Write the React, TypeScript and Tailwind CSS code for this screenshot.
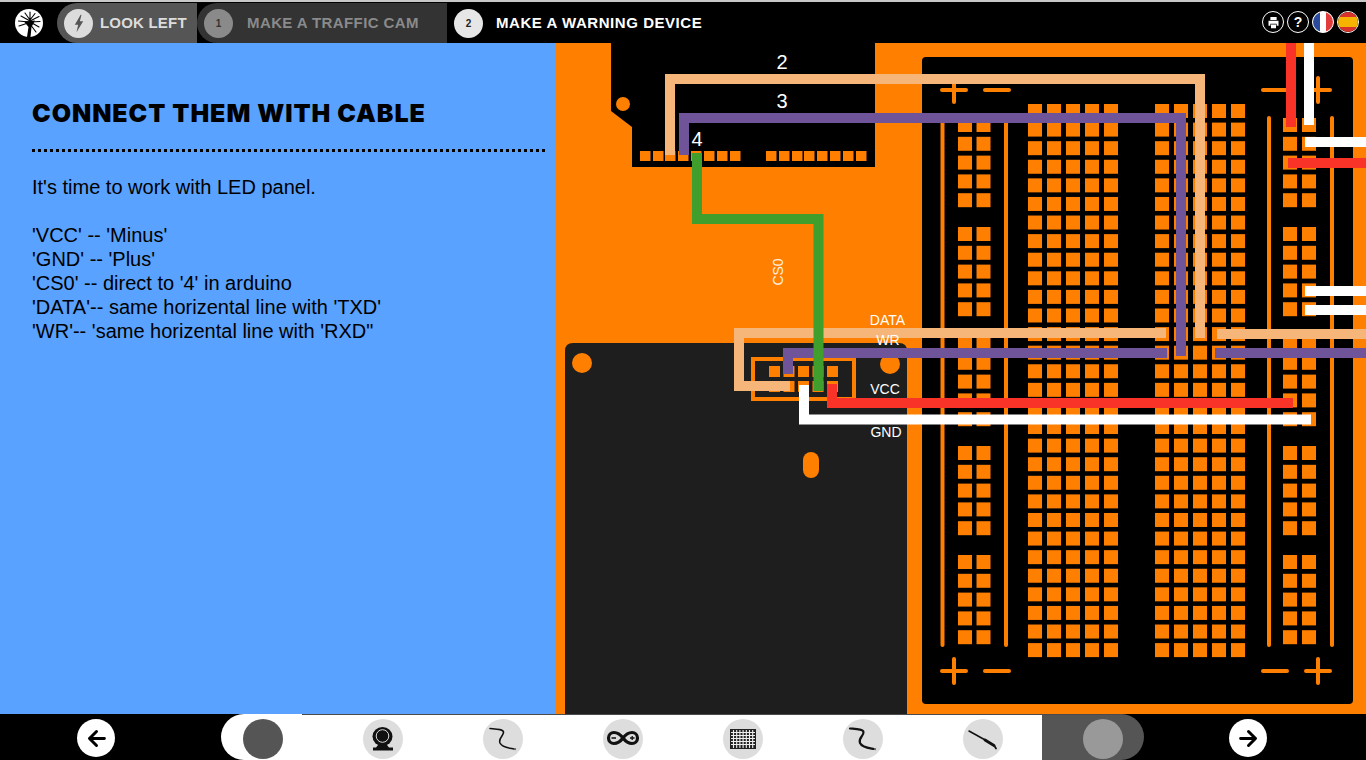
const ORANGE = "#ff7f00";
const range = (n: number) => Array.from({ length: n }, (_, i) => i);

function Line({ d, c, w = 10 }: { d: string; c: string; w?: number }) {
  return <path d={d} fill="none" stroke={c} strokeWidth={w} strokeLinejoin="miter" />;
}

function Sign({ x, y, plus }: { x: number; y: number; plus?: boolean }) {
  return (
    <g stroke={ORANGE} strokeWidth={4} strokeLinecap="round">
      <path d={`M${x - 12} ${y}H${x + 12}`} />
      {plus && <path d={`M${x} ${y - 12}V${y + 12}`} />}
    </g>
  );
}

function Board() {
  const mainRows = range(30).map((i) => 104 + i * 18.59);
  const mainCols = [1028, 1047, 1066, 1085, 1104, 1155, 1174, 1193, 1212, 1231];
  const railRows = [118, 227, 337, 446, 555].flatMap((s) => range(5).map((i) => s + i * 18.8));
  const railCols = [958, 976.5, 1283, 1302];
  return (
    <svg viewBox="555 43 811 671" className="block w-[811px] h-[671px] font-['Liberation_Sans',sans-serif]">
      <rect x="555" y="43" width="811" height="671" fill={ORANGE} />
      <path d="M611 43H875V167H632V127L611 111Z" fill="#000" />
      <circle cx="623" cy="104" r="7" fill={ORANGE} />
      {[640, 653, 665, 678, 691, 704, 717, 730, 766, 779, 792, 804, 817, 830, 843, 856].map((x) => (
        <rect key={x} x={x} y="151" width="10.5" height="10" fill={ORANGE} />
      ))}

      <rect x="922" y="57" width="431" height="647" rx="4" fill="#000" />
      {mainCols.flatMap((x) =>
        mainRows.map((y) => <rect key={`${x}-${y}`} x={x} y={y} width="14" height="14" fill={ORANGE} />),
      )}
      {railCols.flatMap((x) =>
        railRows.map((y) => <rect key={`${x}-${y}`} x={x} y={y} width="14" height="14" fill={ORANGE} />),
      )}
      {[942.5, 1006, 1269, 1332].map((x) => (
        <path key={x} d={`M${x} 118V645`} stroke={ORANGE} strokeWidth="4" strokeLinecap="round" />
      ))}
      <Sign x={954} y={90} plus />
      <Sign x={997} y={90} />
      <Sign x={1275} y={90} />
      <Sign x={1318} y={90} plus />
      <Sign x={954} y={671} plus />
      <Sign x={997} y={671} />
      <Sign x={1275} y={671} />
      <Sign x={1318} y={671} plus />

      <path d="M565 714V351Q565 343 573 343H899Q907 343 907 351V714Z" fill="#1e1e1e" />
      <circle cx="582" cy="363" r="10" fill={ORANGE} />
      <circle cx="890" cy="364" r="10" fill={ORANGE} />
      <rect x="803" y="452" width="16" height="26" rx="8" fill={ORANGE} />
      <rect x="753" y="359" width="101" height="40" fill="none" stroke={ORANGE} strokeWidth="4" />
      {[769, 783.5, 798, 812.5, 827].flatMap((x) =>
        [366, 381].map((y) => <rect key={`${x}-${y}`} x={x} y={y} width="11" height="11" fill={ORANGE} />),
      )}

      <Line c="#f6b679" d="M670 155V79H1200V338" />
      <Line c="#6f5499" d="M684 155V118H1181V356" />
      <Line c="#f6b679" d="M1166 333H739V386H790" />
      <Line c="#f6b679" d="M1217 334H1366" />
      <Line c="#6f5499" d="M788 374V353H1167" />
      <Line c="#6f5499" d="M1215 353H1366" />
      <Line c="#3f9e2c" d="M697 153V219H818.500V391" />
      <Line c="#fa3329" d="M832 384V403H1293" />
      <Line c="#fff" d="M804 385V419.500H1311" />
      <Line c="#fa3329" d="M1291 43V127" />
      <Line c="#fff" d="M1309 43V125" />
      <Line c="#fff" d="M1305 142H1366" />
      <Line c="#fa3329" d="M1288 163H1366" />
      <Line c="#fff" d="M1305 291H1366" />
      <Line c="#fff" d="M1305 310H1366" />

      <g fill="#fff" textAnchor="middle">
        <text x="782" y="69" fontSize="20">2</text>
        <text x="782" y="108" fontSize="20">3</text>
        <text x="697" y="146" fontSize="20">4</text>
        <text x="887.500" y="325" fontSize="14">DATA</text>
        <text x="888" y="345" fontSize="14">WR</text>
        <text x="885" y="394" fontSize="14">VCC</text>
        <text x="886" y="437" fontSize="14">GND</text>
        <text x="0" y="0" fontSize="14" fill="#fff0e0" transform="translate(783 272) rotate(-90)">CS0</text>
      </g>
    </svg>
  );
}

function Logo() {
  return (
    <svg viewBox="0 0 28 28" className="h-7 w-7">
      <circle cx="14" cy="14" r="14" fill="#fff" />
      <path d="M12 28L13.500 18L9 12.500L20 11.500L16.500 18L15.500 28Z" fill="#000" />
      <g stroke="#000" strokeWidth="1.1" strokeLinecap="round">
        <path d="M15 11L15 3M15 11L10 4M15 11L20 4.500M15 12L6 7M15 12L24 7.500M14 13L3.500 12M15 13L25 12.500M13 14L4 17M17 14L24 18M15 15L21 23" />
      </g>
    </svg>
  );
}

function Step({ label, icon, text, pill, circle }: { label: string; icon: React.ReactNode; text: string; pill: string; circle: string }) {
  return (
    <div className={`flex h-[40px] items-center rounded-l-[20px] pl-[7px] ${pill}`}>
      <div className={`flex h-[29px] w-[29px] shrink-0 items-center justify-center rounded-full text-[10px] font-bold ${circle}`}>{icon}</div>
      <span className={`mt-px whitespace-nowrap text-[15px] font-bold ${text}`}>{label}</span>
    </div>
  );
}

function Round({ children, className = "" }: { children: React.ReactNode; className?: string }) {
  return <div className={`flex h-[22px] w-[22px] items-center justify-center overflow-hidden rounded-full border-[1.5px] border-white ${className}`}>{children}</div>;
}

function TopBar() {
  return (
    <header className="flex h-[43px] items-end justify-between border-t-2 border-[#c8c8c8] bg-black">
      <div className="flex items-end">
        <div className="flex h-[41px] w-[57px] items-center pl-[15px]"><Logo /></div>
        <Step
          label="LOOK LEFT"
          text="ml-[7px] tracking-[0.2px] text-[#dcdcdc]"
          pill="w-[140px] bg-[#555555]"
          circle="bg-[#dcdcdc] text-[#555]"
          icon={
            <svg viewBox="0 0 24 24" className="h-[20px] w-[20px]"><path d="M14 2L7 14H11L9 23L17 10H13L15 2Z" fill="#555" /></svg>
          }
        />
        <Step
          label="MAKE A TRAFFIC CAM"
          text="ml-[14px] tracking-[0.4px] text-[#8a8a8a]"
          pill="w-[250px] bg-[#333333]"
          circle="bg-[#8a8a8a] text-[#333]"
          icon="1"
        />
        <Step
          label="MAKE A WARNING DEVICE"
          text="ml-[13px] tracking-[0.55px] text-white"
          pill="bg-black"
          circle="bg-[#e6e6e6] text-[#222]"
          icon="2"
        />
      </div>
      <div className="mb-[10px] mr-[7px] flex gap-[3px]">
        <Round>
          <svg viewBox="0 0 24 24" className="h-[15px] w-[15px]" fill="#fff"><path d="M7 3H17V8H7ZM4 9H20V17H17V14H7V17H4ZM8 15H16V21H8Z" /></svg>
        </Round>
        <Round><span className="text-[14px] font-bold leading-none text-white">?</span></Round>
        <Round className="bg-white">
          <div className="flex h-full w-full"><div className="w-1/3 bg-[#2a4a9e]" /><div className="w-1/3 bg-white" /><div className="w-1/3 bg-[#e23b3b]" /></div>
        </Round>
        <Round>
          <div className="flex h-full w-full flex-col"><div className="h-1/4 bg-[#d8322a]" /><div className="h-1/2 bg-[#f6b400]" /><div className="h-1/4 bg-[#d8322a]" /></div>
        </Round>
      </div>
    </header>
  );
}

function Wire({ w }: { w: number }) {
  return (
    <svg viewBox="0 0 40 40" className="h-10 w-10">
      <path d="M7 9.500C13 10 20 10 20.500 13C21 17 15 19 17 24C19 28.500 26 29 31 30" fill="none" stroke="#111" strokeWidth={w} strokeLinecap="round" />
      <path d="M31 30L33 30.300" stroke="#666" strokeWidth="2" />
    </svg>
  );
}

function BottomBar() {
  const slot = "flex h-10 w-10 shrink-0 items-center justify-center rounded-full bg-[#dddddd]";
  const Arrow = ({ left }: { left?: boolean }) => (
    <div className="flex h-[38px] w-[38px] items-center justify-center rounded-full bg-white">
      <svg viewBox="0 0 24 24" className="h-[21px] w-[21px]" fill="none" stroke="#000" strokeWidth="3.400" strokeLinecap="round" strokeLinejoin="round">
        {left ? <path d="M21 12H4M12 4L4 12L12 20" /> : <path d="M3 12H20M12 4L20 12L12 20" />}
      </svg>
    </div>
  );
  return (
    <footer className="relative flex h-[46px] items-center bg-black">
      <div className="ml-[77px] mr-[106px] mt-[2px]"><Arrow left /></div>
      <div className="flex h-full w-[821px] items-end gap-[80px] rounded-l-[23px] bg-white pb-px pl-[22px]">
        <div className="h-10 w-10 shrink-0 rounded-full bg-[#555555]" />
        <div className={slot}>
          <svg viewBox="0 0 40 40" className="h-10 w-10">
            <ellipse cx="19.500" cy="17.500" rx="10" ry="9.500" fill="#111" />
            <circle cx="19.500" cy="17" r="6.300" fill="none" stroke="#ddd" strokeWidth="1" />
            <path d="M15 26H24L26 28.500H30V31.500H10V28.500H13Z" fill="#111" />
          </svg>
        </div>
        <div className={slot}><Wire w={1.6} /></div>
        <div className={slot}>
          <svg viewBox="0 0 40 40" className="h-10 w-10" fill="none" stroke="#111" strokeWidth="3.200">
            <path d="M20 19C17 15 14 13.500 11 13.500A5.500 5.500 0 0 0 11 24.500C14 24.500 17 23 20 19C23 15 26 13.500 29 13.500A5.500 5.500 0 0 1 29 24.500C26 24.500 23 23 20 19Z" />
            <path d="M8.500 19H13M27 19H31.500M29.200 17V21" strokeWidth="1.300" />
          </svg>
        </div>
        <div className={slot}>
          <svg viewBox="0 0 40 40" className="h-10 w-10">
            <rect x="7" y="10" width="26" height="20" fill="#222" />
            <path d="M10.500 11V29M13.700 11V29M16.900 11V29M20.100 11V29M23.300 11V29M26.500 11V29M29.700 11V29M8 13.500H32M8 16.500H32M8 19.500H32M8 22.500H32M8 25.500H32" stroke="#eeeeee" strokeWidth="1.100" />
          </svg>
        </div>
        <div className={slot}><Wire w={2.2} /></div>
        <div className={slot}>
          <svg viewBox="0 0 40 40" className="h-10 w-10" fill="none" stroke="#111" strokeLinecap="round">
            <path d="M6 12L24 22" strokeWidth="1.500" />
            <path d="M22 21L31 26.500" strokeWidth="2.800" />
            <path d="M31.500 27L33 29.500" strokeWidth="1.800" />
          </svg>
        </div>
      </div>
      <div className="flex h-full w-[102px] items-end rounded-r-[23px] bg-[#555555] pb-px pl-[41px]">
        <div className="h-10 w-10 rounded-full bg-[#999999]" />
      </div>
      <div className="ml-[85px] mt-[2px]"><Arrow /></div>
      <div className="absolute left-[302px] top-0 h-px w-[819px] bg-[#4a4a4a]" />
    </footer>
  );
}

export default function App() {
  return (
    <div className="flex h-[760px] w-[1366px] flex-col overflow-hidden bg-black font-['Liberation_Sans',Arial,sans-serif]">
      <TopBar />
      <main className="flex h-[671px]">
        <section className="w-[555px] bg-[#5aa2ff] pl-[32px] pr-[10px] pt-[54px] text-black">
          <h1 className="whitespace-nowrap font-['Inter',sans-serif] text-[25px] font-black leading-[32px] tracking-[0.95px]">CONNECT THEM WITH CABLE</h1>
          <div className="mt-[20px] border-t-[3px] border-dotted border-black" />
          <div className="mt-[23px] text-[20px] leading-[24px]">
            <p>It's time to work with LED panel.</p>
            <p className="mt-[24px]">'VCC' -- 'Minus'</p>
            <p>'GND' -- 'Plus'</p>
            <p>'CS0' -- direct to '4' in arduino</p>
            <p>'DATA'-- same horizental line with 'TXD'</p>
            <p>'WR'-- 'same horizental line with 'RXD"</p>
          </div>
        </section>
        <Board />
      </main>
      <BottomBar />
    </div>
  );
}
